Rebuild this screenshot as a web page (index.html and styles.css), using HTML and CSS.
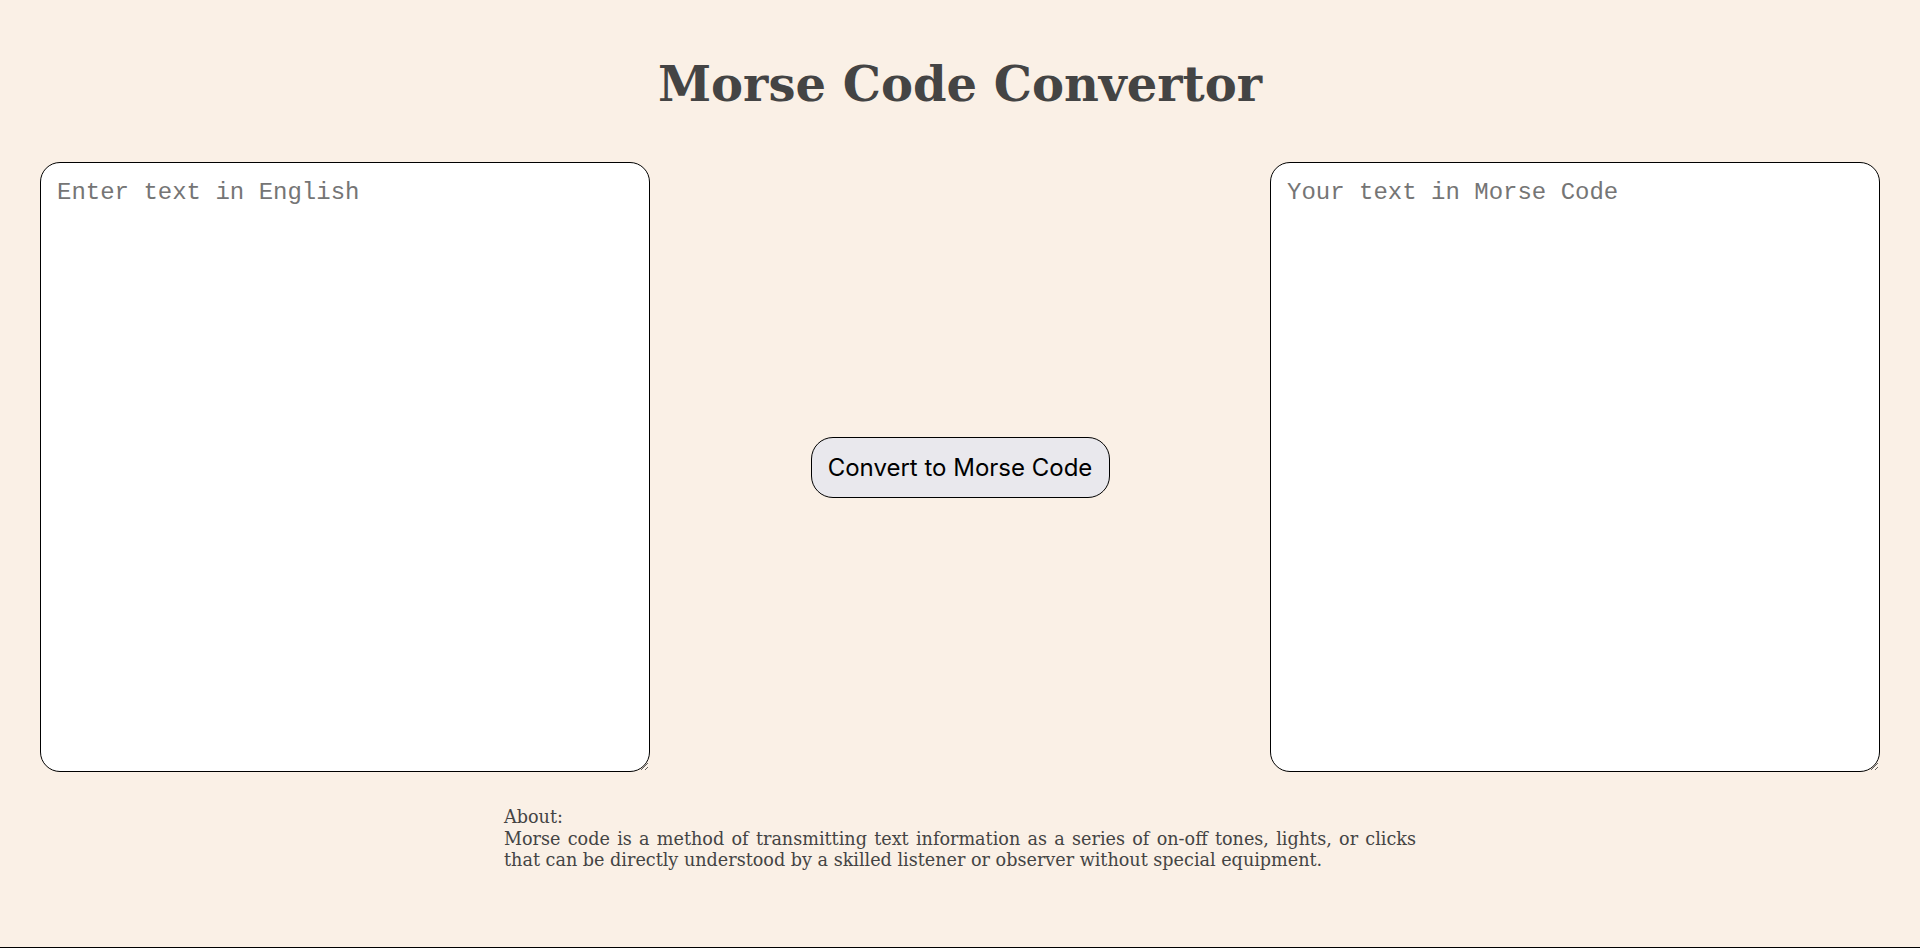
FILE: index.html
```html
<!DOCTYPE html>
<html lang="en">
<head>
<meta charset="utf-8">
<title>Morse Code Convertor</title>
<link rel="stylesheet" href="styles.css">
</head>
<body>
<main class="page">
  <h1 class="title">Morse Code Convertor</h1>
  <section class="converter">
    <textarea class="box" placeholder="Enter text in English"></textarea>
    <button class="convert" type="button">Convert to Morse Code</button>
    <textarea class="box" placeholder="Your text in Morse Code" readonly></textarea>
  </section>
  <section class="about">
    <p class="about-title">About:</p>
    <p class="about-text">Morse code is a method of transmitting text information as a series of on-off tones, lights, or clicks that can be directly understood by a skilled listener or observer without special equipment.</p>
  </section>
</main>
</body>
</html>
```

FILE: styles.css
```css
html, body {
  margin: 0;
  padding: 0;
}
body {
  background: #faf0e6;
  font-family: "DejaVu Serif", serif;
  color: #444;
  height: 948px;
  box-sizing: border-box;
  border-bottom: 1px solid #000;
}
.page {
  display: flex;
  flex-direction: column;
}
.title {
  margin: 0;
  padding-top: 56px;
  text-align: center;
  font-family: "DejaVu Serif", serif;
  font-weight: bold;
  font-size: 48px;
  line-height: 56px;
  color: #444;
}
.converter {
  display: flex;
  justify-content: space-between;
  align-items: center;
  padding: 0 40px;
  margin-top: 50px;
}
.box {
  width: 610px;
  height: 610px;
  box-sizing: border-box;
  border: 1px solid #000;
  border-radius: 20px;
  padding: 16px;
  background: #fff;
  font-family: "Liberation Mono", monospace;
  font-size: 24px;
  line-height: 28px;
  color: #333;
  margin: 0;
}
.box::placeholder {
  color: #757575;
}
.convert {
  width: 299px;
  height: 61px;
  box-sizing: border-box;
  border: 1px solid #000;
  border-radius: 22px;
  background: #e9e8ed;
  font-family: Inter, sans-serif;
  font-size: 24px;
  color: #000;
  padding: 0 12px;
  cursor: pointer;
}
.about {
  width: 912px;
  margin: 35px auto 0;
  font-family: "DejaVu Serif", serif;
  font-size: 17.6px;
  line-height: 21.5px;
  color: #444;
  text-align: justify;
}
.about p {
  margin: 0;
}
```
